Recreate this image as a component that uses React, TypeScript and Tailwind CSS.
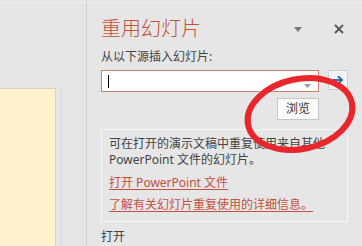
import React from "react";

export default function App() {
  const font = { fontFamily: '"Noto Sans", "Noto Sans CJK SC", sans-serif' };
  return (
    <div
      className="relative w-[362px] h-[246px] overflow-hidden bg-[#e6e6e6] flex text-[#444]"
      style={font}
    >
      {/* top light line */}
      <div className="absolute left-0 top-[2px] w-[362px] h-px bg-[#eeeeee]" />
      {/* left editing area */}
      <div className="w-[87px] h-full flex flex-col pt-[88px] border-r border-[#cfcfcf]">
        <div className="flex h-full">
          <div className="w-[56px] h-full bg-[#fff2cc] border-t border-r border-[#d9d2bd]" />
          <div className="ml-[5px] w-px h-full bg-[#dcdcdc]" />
        </div>
      </div>
      {/* task pane */}
      <div className="flex-1 pl-[14px] pr-[13px] pt-[16px] flex flex-col">
        <div className="flex items-center justify-between h-[26px]">
          <div className="text-[20px] leading-[26px] text-[#c4503e] font-light">重用幻灯片</div>
          <div className="flex items-center gap-[32px] pr-[5px]">
            <svg width="8" height="5" viewBox="0 0 8 5">
              <path d="M0 0 L8 0 L4 5 Z" fill="#777" />
            </svg>
            <svg width="10" height="10" viewBox="0 0 10 10">
              <path d="M1 1 L9 9 M9 1 L1 9" stroke="#555" strokeWidth="1.8" />
            </svg>
          </div>
        </div>
        <div className="mt-[7px] text-[12px] leading-[16px] text-[#444]">从以下源插入幻灯片:</div>
        <div className="mt-[5px] flex items-start gap-[9px]">
          <div className="relative w-[218px] h-[22px] bg-white border border-[#c9806f] flex items-center pl-[6px]">
            <div className="w-px h-[13px] bg-black" />
            <svg className="absolute right-[7px] top-[13px]" width="7" height="4" viewBox="0 0 7 4">
              <path d="M0 0 L7 0 L3.5 4 Z" fill="#999" />
            </svg>
          </div>
          <div className="w-[20px] h-[20px] bg-[#f4f4f4] border border-[#cfcfcf] flex items-center justify-center">
            <svg width="12" height="10" viewBox="0 0 12 10">
              <path d="M1 5 H10 M6 1.2 L10 5 L6 8.8" stroke="#2e6db4" strokeWidth="2" fill="none" />
            </svg>
          </div>
        </div>
        <div className="mt-[6px] w-[218px] flex justify-end">
          <div className="w-[42px] h-[22px] bg-[#fbfbfb] border border-[#c6c6c6] flex items-center justify-center text-[12px] leading-[16px] text-[#333]">
            浏览
          </div>
        </div>
        <div className="mt-[9px] w-[247px] h-[93px] border border-[#f7f7f7] pl-[7px] pt-[6px] text-[12px] leading-[16px]">
          <div>可在打开的演示文稿中重复使用来自其他</div>
          <div>PowerPoint 文件的幻灯片。</div>
          <div className="mt-[7px] text-[#c4503e] underline underline-offset-2">打开 PowerPoint 文件</div>
          <div className="mt-[6px] text-[#c4503e] underline underline-offset-2">了解有关幻灯片重复使用的详细信息。</div>
        </div>
        <div className="mt-[7px] text-[12px] leading-[16px]">打开</div>
      </div>
      {/* red annotation circle */}
      <svg className="absolute left-0 top-0 pointer-events-none" width="362" height="246" viewBox="0 0 362 246">
        <ellipse
          cx="300"
          cy="114"
          rx="53"
          ry="35"
          transform="rotate(-12 300 114)"
          fill="none"
          stroke="#e8262b"
          strokeWidth="6"
        />
      </svg>
    </div>
  );
}
